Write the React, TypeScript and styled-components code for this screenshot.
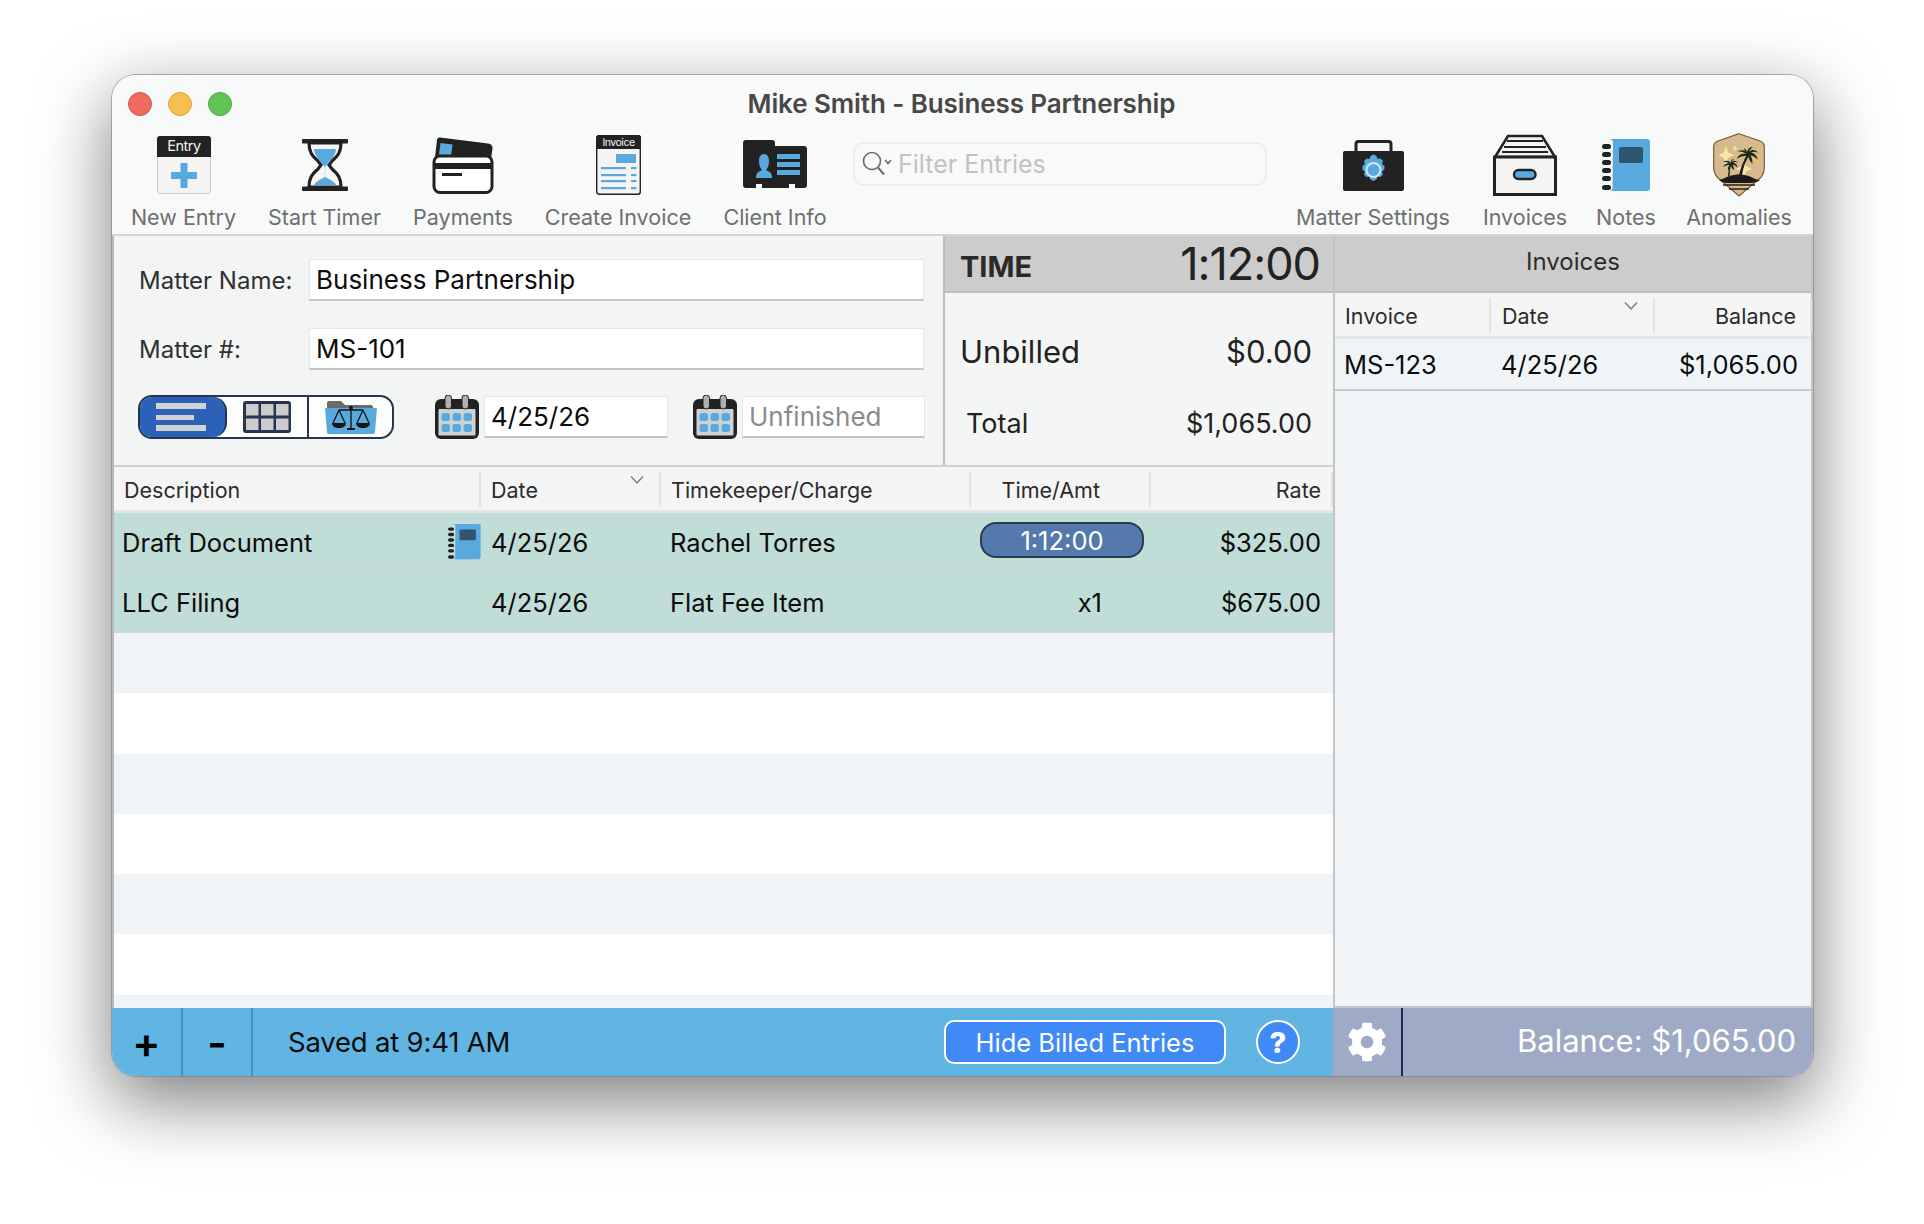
import styled, { createGlobalStyle } from "styled-components";
import { FaCog } from "react-icons/fa";

const DARK = "#222222";
const BLUE = "#5aa9de";

const GlobalStyle = createGlobalStyle`
  html, body {
    margin: 0;
    background: #ffffff;
    font-family: Inter, "Noto Sans", "Liberation Sans", sans-serif;
    overflow: hidden;
  }
  #root {
    width: 1924px;
    height: 1224px;
  }
`;

const Page = styled.div`
  box-sizing: border-box;
  width: 1924px;
  height: 1224px;
  padding: 75px 0 0 112px;
`;

const Window = styled.div`
  display: flex;
  flex-direction: column;
  width: 1701px;
  height: 1001px;
  border-radius: 24px;
  overflow: hidden;
  background: #f8f9f9;
  box-shadow: 0 0 0 1px rgba(120, 120, 120, 0.55), 0 24px 70px 2px rgba(0, 0, 0, 0.5);
`;

const Header = styled.header`
  box-sizing: border-box;
  height: 161px;
  flex: none;
  background: #f8f9f9;
  border-bottom: 2px solid #d2d3d3;
`;

const TitleRow = styled.div`
  position: relative;
  display: flex;
  align-items: center;
  justify-content: center;
  height: 57px;
  padding-top: 0;
`;

const Lights = styled.div`
  position: absolute;
  left: 16px;
  top: 17px;
  display: flex;
  gap: 16px;
`;

const Light = styled.span<{ $c: string; $b: string }>`
  box-sizing: border-box;
  width: 24px;
  height: 24px;
  border-radius: 50%;
  background: ${(p) => p.$c};
  border: 1px solid ${(p) => p.$b};
`;

const Title = styled.div`
  margin-top: -0px;
  font-size: 26px;
  font-weight: 600;
  color: #484848;
  letter-spacing: -0.1px;
  margin-left: -2px;
`;

const Toolbar = styled.div`
  display: flex;
  align-items: flex-start;
  padding: 0 20px 0 18px;
`;

const ToolGroup = styled.div`
  display: flex;
  gap: 29px;
`;

const Tool = styled.div<{ $w: number }>`
  display: flex;
  flex-direction: column;
  align-items: center;
  width: ${(p) => p.$w}px;
`;

const ToolIcon = styled.div`
  display: flex;
  align-items: center;
  justify-content: center;
  height: 66px;
`;

const ToolLabel = styled.div`
  height: 38px;
  line-height: 38px;
  font-size: 21.5px;
  color: #6f6f6f;
  white-space: nowrap;
`;

const SearchBox = styled.div`
  box-sizing: border-box;
  display: flex;
  align-items: center;
  gap: 6px;
  width: 414px;
  height: 44px;
  margin: 10px 0 0 25px;
  padding-left: 7px;
  border: 2px solid #ededed;
  border-radius: 10px;
`;

const SearchText = styled.span`
  font-size: 25px;
  color: #c2c2c2;
`;

const RightTools = styled(ToolGroup)`
  margin-left: auto;
`;

const Main = styled.main`
  display: flex;
  flex: 1;
  min-height: 0;
`;

const LeftColumn = styled.div`
  box-sizing: border-box;
  display: flex;
  flex-direction: column;
  width: 1221px;
  border-left: 2px solid #b9b9b9;
  background: #ffffff;
`;

const TopPanels = styled.div`
  display: flex;
  height: 231px;
  flex: none;
  border-bottom: 2px solid #cfcfcf;
  box-sizing: border-box;
`;

const Form = styled.div`
  box-sizing: border-box;
  width: 829px;
  padding: 23px 0 0 25px;
  background: #f3f5f5;
`;

const FieldRow = styled.div`
  display: flex;
  align-items: center;
  margin-bottom: 27px;
`;

const FieldLabel = styled.label`
  width: 170px;
  font-size: 24px;
  color: #303030;
`;

const Field = styled.div<{ $w: number; $muted?: boolean }>`
  box-sizing: border-box;
  display: flex;
  align-items: center;
  width: ${(p) => p.$w}px;
  height: 42px;
  padding-left: 6px;
  background: #ffffff;
  border: 1px solid #e6e6e6;
  border-bottom: 2px solid #c4c4c4;
  font-size: 26px;
  color: ${(p) => (p.$muted ? "#8b8b8b" : "#0c0c0c")};
  white-space: nowrap;
`;

const ControlRow = styled.div`
  display: flex;
  align-items: center;
  margin-top: -2px;
`;

const Segments = styled.div`
  box-sizing: border-box;
  display: flex;
  width: 256px;
  height: 44px;
  margin-left: -1px;
  border: 2px solid #26344f;
  border-radius: 14px;
  overflow: hidden;
  background: #fdfdfd;
`;

const Segment = styled.div<{ $active?: boolean; $w: number }>`
  box-sizing: border-box;
  display: flex;
  align-items: center;
  justify-content: center;
  width: ${(p) => p.$w}px;
  background: ${(p) => (p.$active ? "#2b61b7" : "transparent")};
  border-right: 2px solid #26344f;
  border-radius: ${(p) => (p.$active ? "0 14px 14px 0" : "0")};
  &:last-child {
    border-right: none;
  }
`;

const CalendarSlot = styled.div<{ $ml: number }>`
  display: flex;
  margin: 0 5px 0 ${(p) => p.$ml}px;
`;

const TimePanel = styled.div`
  box-sizing: border-box;
  width: 390px;
  border-left: 2px solid #bdbdbd;
  background: #f4f6f6;
`;

const TimeHeader = styled.div`
  box-sizing: border-box;
  display: flex;
  align-items: center;
  justify-content: space-between;
  height: 57px;
  padding: 0 13px 0 15px;
  background: #cccccc;
  border-bottom: 2px solid #bdbdbd;
`;

const TimeTitle = styled.span`
  font-size: 29px;
  font-weight: 700;
  color: #2a2a2a;
  margin-top: 6px;
`;

const TimeValue = styled.span`
  font-size: 45px;
  color: #222222;
  letter-spacing: -1px;
`;

const Amount = styled.div<{ $size: number; $pl: number; $h: number }>`
  display: flex;
  align-items: center;
  justify-content: space-between;
  height: ${(p) => p.$h}px;
  padding: 0 21px 0 ${(p) => p.$pl}px;
  font-size: ${(p) => p.$size}px;
  color: #222222;
`;

const TableHead = styled.div<{ $cols: string }>`
  box-sizing: border-box;
  display: grid;
  grid-template-columns: ${(p) => p.$cols};
  height: 46px;
  flex: none;
  background: #f5f5f5;
  border-bottom: 3px solid #e6e6e6;
`;

const HeadCell = styled.div<{ $align?: string; $pl?: number; $pr?: number }>`
  box-sizing: border-box;
  display: flex;
  align-items: center;
  justify-content: ${(p) => p.$align ?? "flex-start"};
  position: relative;
  margin: 5px 0 3px;
  padding-left: ${(p) => p.$pl ?? 10}px;
  padding-right: ${(p) => p.$pr ?? 0}px;
  border-right: 2px solid #e3e3e3;
  font-size: 21.5px;
  color: #2b2b2b;
`;

const SortChevron = styled.svg<{ $right: number }>`
  position: absolute;
  right: ${(p) => p.$right}px;
  top: 3px;
`;

const EntryRow = styled.div<{ $cols: string }>`
  box-sizing: border-box;
  display: grid;
  grid-template-columns: ${(p) => p.$cols};
  height: 60px;
  flex: none;
  background: #c0ddd8;
  border-bottom: 2px solid #cfd3e6;
`;

const EntryCell = styled.div<{ $align?: string; $pl?: number; $pr?: number }>`
  box-sizing: border-box;
  display: flex;
  align-items: center;
  justify-content: ${(p) => p.$align ?? "flex-start"};
  padding-left: ${(p) => p.$pl ?? 0}px;
  padding-right: ${(p) => p.$pr ?? 0}px;
  font-size: 25.5px;
  color: #0c0c0c;
  white-space: nowrap;
`;

const TimePill = styled.div`
  box-sizing: border-box;
  display: flex;
  align-items: center;
  justify-content: center;
  width: 164px;
  height: 36px;
  margin-top: -4px;
  border: 2px solid #2a3b52;
  border-radius: 16px;
  background: #5379ad;
  color: #ffffff;
  font-size: 25.5px;
`;

const Stripes = styled.div`
  flex: 1;
  min-height: 0;
  overflow: hidden;
`;

const Stripe = styled.div<{ $odd: boolean }>`
  height: 60.3px;
  background: ${(p) => (p.$odd ? "#f0f4f7" : "#ffffff")};
`;

const RightColumn = styled.div`
  box-sizing: border-box;
  display: flex;
  flex-direction: column;
  width: 480px;
  border-left: 2px solid #c4c4c4;
  border-right: 2px solid #c4c4c4;
  border-bottom: 2px solid #c4c4c4;
  background: #f0f4f7;
`;

const InvoicesTitle = styled.div`
  box-sizing: border-box;
  display: flex;
  align-items: center;
  justify-content: center;
  height: 57px;
  flex: none;
  background: #cccccc;
  border-bottom: 2px solid #bdbdbd;
  font-size: 24px;
  color: #2c2c2c;
  padding-bottom: 4px;
`;

const InvoiceRow = styled.div<{ $cols: string }>`
  box-sizing: border-box;
  display: grid;
  grid-template-columns: ${(p) => p.$cols};
  height: 52px;
  flex: none;
  border-bottom: 2px solid #c9c9c9;
`;

const Footer = styled.footer`
  display: flex;
  height: 68px;
  flex: none;
`;

const FooterLeft = styled.div`
  display: flex;
  align-items: stretch;
  width: 1221px;
  padding-right: 33px;
  box-sizing: border-box;
  background: #60b5e3;
`;

const FooterKey = styled.div<{ $w: number }>`
  box-sizing: border-box;
  display: flex;
  align-items: center;
  justify-content: center;
  width: ${(p) => p.$w}px;
  border-right: 2px solid #4a8fbd;
  font-size: 42px;
  font-weight: 600;
  color: #000000;
`;

const SavedText = styled.div`
  display: flex;
  align-items: center;
  padding-left: 35px;
  font-size: 27.5px;
  color: #0b0b0b;
  letter-spacing: -0.2px;
`;

const HideButton = styled.div`
  box-sizing: border-box;
  display: flex;
  align-items: center;
  justify-content: center;
  align-self: center;
  width: 282px;
  height: 44px;
  margin-left: auto;
  border: 2px solid #ffffff;
  border-radius: 10px;
  background: #3f8af7;
  color: #ffffff;
  font-size: 25.5px;
`;

const HelpButton = styled.div`
  box-sizing: border-box;
  display: flex;
  align-items: center;
  justify-content: center;
  align-self: center;
  width: 44px;
  height: 44px;
  margin-left: 30px;
  border: 2px solid #ffffff;
  border-radius: 50%;
  background: #3f8af7;
  color: #ffffff;
  font-size: 29px;
  font-weight: 800;
`;

const FooterRight = styled.div`
  display: flex;
  flex: 1;
  background: #9fabc6;
`;

const GearCell = styled.div`
  box-sizing: border-box;
  display: flex;
  align-items: center;
  justify-content: center;
  width: 70px;
  border-right: 2px solid #1f2d4d;
  color: #ffffff;
`;

const BalanceText = styled.div`
  display: flex;
  align-items: center;
  justify-content: flex-end;
  flex: 1;
  padding: 0 17px 4px 0;
  font-size: 31px;
  color: #ffffff;
`;

const EntryIcon = () => (
  <svg width="54" height="58" viewBox="0 0 54 58">
    <rect x="0.5" y="0.5" width="53" height="57" rx="3" fill="#f4f4f4" stroke="#cccccc" />
    <path d="M0 3a3 3 0 0 1 3-3h48a3 3 0 0 1 3 3v18H0z" fill={DARK} />
    <text x="27" y="15" textAnchor="middle" fontSize="14.5" fontFamily="Inter, sans-serif" fill="#f2f2f2" letterSpacing="-0.5">
      Entry
    </text>
    <path d="M23.5 27h7v9h9.5v7h-9.5v9h-7v-9H14v-7h9.5z" fill={BLUE} />
  </svg>
);

const HourglassIcon = () => (
  <svg width="46" height="52" viewBox="0 0 46 52">
    <path d="M7 4c0 9 3 13 9 18l3 4-3 4c-6 5-9 9-9 18h32c0-9-3-13-9-18l-3-4 3-4c6-5 9-9 9-18z" fill="#f5f5f5" stroke={DARK} strokeWidth="3.2" />
    <path d="M12 10h22c-.5 6-4 10-8 14l-3 5-3-5c-4-4-7.500-8-8-14z" fill={BLUE} />
    <path d="M23 26v12" stroke="#d9dfe5" strokeWidth="1" />
    <path d="M12 46c1-3 7-6 11-8 4 2 10 5 11 8z" fill={BLUE} />
    <rect x="0" y="0" width="46" height="4.500" rx="1" fill={DARK} />
    <rect x="0" y="47.500" width="46" height="4.500" rx="1" fill={DARK} />
  </svg>
);

const PaymentsIcon = () => (
  <svg width="62" height="58" viewBox="0 0 62 58">
    <path d="M8 1.500l48 6c3 .4 5 2.500 4.500 5L58 30H2L5 4c.3-2 1.500-2.800 3-2.500z" fill={DARK} />
    <path d="M8.500 7l12 1.500-1.500 11.500-12-1.500z" fill={BLUE} />
    <rect x="2" y="20" width="58" height="36.500" rx="6" fill="#ffffff" stroke={DARK} strokeWidth="3" />
    <rect x="1" y="27" width="60" height="6" fill={DARK} />
    <rect x="10" y="37" width="20" height="3" fill={DARK} />
  </svg>
);

const InvoiceIcon = () => (
  <svg width="45" height="60" viewBox="0 0 45 60">
    <rect x="0.700" y="0.700" width="43.600" height="58.600" rx="2.500" fill="#f4f4f4" stroke={DARK} strokeWidth="1.400" />
    <path d="M0 3a3 3 0 0 1 3-3h39a3 3 0 0 1 3 3v11H0z" fill={DARK} />
    <text x="22.500" y="11" textAnchor="middle" fontSize="10.500" fontFamily="Inter, sans-serif" fill="#f2f2f2" letterSpacing="-0.5">
      Invoice
    </text>
    <rect x="20" y="19" width="20" height="9" fill={BLUE} />
    {[32, 39, 45, 52].map((y) => (
      <g key={y} fill={BLUE}>
        <rect x="5" y={y} width="25" height="2.200" />
        <rect x="35" y={y} width="5.500" height="2.200" />
      </g>
    ))}
  </svg>
);

const ClientIcon = () => (
  <svg width="64" height="50" viewBox="0 0 64 50">
    <path d="M3 0h26c2 0 3 1 3 3v3h29c2 0 3 1 3 3v36c0 2-1 3-3 3H52v-4h-6v4H19v-4h-6v4H3c-2 0-3-1-3-3V3c0-2 1-3 3-3z" fill={DARK} />
    <path d="M14 37c0-5 2-6 6-8-2-2-3-5-3-9 0-4 1.500-7 5-7s5 3 5 7c0 4-1 7-3 9 4 2 6 3 6 8z" fill={BLUE} transform="translate(-1 1)" />
    <rect x="34" y="14" width="23" height="5" fill={BLUE} />
    <rect x="34" y="22" width="23" height="5" fill={BLUE} />
    <rect x="34" y="30" width="23" height="5" fill={BLUE} />
  </svg>
);

const SearchGlyph = () => (
  <svg width="30" height="26" viewBox="0 0 30 26" fill="none" stroke="#6b6b6b" strokeWidth="1.600">
    <circle cx="10" cy="10" r="8.500" />
    <path d="M16 16.500l6 7" strokeWidth="2" />
    <path d="M23 9l3 3.500 3-3.500" />
  </svg>
);

const CaseIcon = () => (
  <svg width="61" height="51" viewBox="0 0 61 51">
    <path d="M13 12V4c0-1.500 1-2.500 2.500-2.500h30C47 1.500 48 2.500 48 4v8" fill="#f5f5f5" stroke={DARK} strokeWidth="3" />
    <rect x="0" y="11" width="61" height="40" rx="2" fill={DARK} />
    <path
      d="M27.500 17l3-1.500 3 1.500 1 3 3-.5 2.500 2.500-1 3 2.500 2-.1 3.500-2.500 2 1 3-2.500 2.500-3-.5-1 3-3 1.500-3-1.500-1-3-3 .5-2.500-2.500 1-3-2.500-2 .1-3.500 2.500-2-1-3 2.500-2.500 3 .5z"
      fill={BLUE}
      transform="translate(0 -1) "
    />
    <circle cx="30.500" cy="30" r="7" fill={BLUE} stroke="#cfe8f8" strokeWidth="2" />
  </svg>
);

const BoxIcon = () => (
  <svg width="64" height="62" viewBox="0 0 64 62">
    <path d="M15 2h34l13 21H2z" fill="#f4f4f4" stroke={DARK} strokeWidth="2.600" />
    <path d="M14 7h36M11 13h42M9 18h46" stroke={DARK} strokeWidth="2.200" />
    <rect x="1.500" y="23" width="61" height="37.500" fill="#f4f4f4" stroke={DARK} strokeWidth="3" />
    <rect x="21" y="36" width="21.500" height="9" rx="4.500" fill={BLUE} stroke={DARK} strokeWidth="2.400" />
  </svg>
);

const NotebookIcon = ({ scale = 1 }: { scale?: number }) => (
  <svg width={48 * scale} height={52 * scale} viewBox="0 0 48 52">
    <path d="M8 0h37c2 0 3 1 3 3v46c0 2-1 3-3 3H8c2-1 3-2 2.500-3l.5-46C11 2 10 1 8 0z" fill={BLUE} />
    <rect x="17" y="8" width="24" height="16" rx="2" fill="#2f566f" />
    {[5, 13, 21, 29, 37, 46].map((y) => (
      <rect key={y} x="0" y={y} width="9" height="5" rx="2.500" fill={DARK} />
    ))}
  </svg>
);

const AnomaliesIcon = () => (
  <svg width="52" height="64" viewBox="0 0 52 64">
    <path d="M26 .700L47 8c3 1 4.300 3 4.300 6v21c0 4-1 6-3 9L26 63 4 44c-2-3-3.300-5-3.300-9V14c0-3 1.300-5 4.300-6z" fill="#d6ba8e" stroke="#7c5a32" strokeWidth="1.200" />
    <path d="M13 13l2.200 6.500 5.800 2.500-5.800 3-2.200 7-2.200-7-5.300-3 5.300-2.500z" fill="#f7e6a6" />
    <path d="M31 26l2 7 5.500 3-5.500 2.500-2 6.500-2-6.500-6-2.500 6-3z" fill="#f7e6a6" />
    <path d="M44 22l1 3 2.500 1-2.500 1-1 3.500-1-3.500-2.500-1 2.500-1z" fill="#f0c95a" />
    <path d="M22 12l.8 2.500 2.200.8-2.200 1-.8 2.500-.8-2.500-2.200-1 2.200-.8z" fill="#f7e6a6" />
    <path d="M26 42c2-9 5-16 9-21l1.500.6c-3.500 5-6 12-7.500 20.400z" fill={DARK} />
    <path d="M36 21c-3-4-8-5-12-2 4-1 7 0 9 2-4-1-8 1-9 5 3-2.500 6-3.500 9.500-3-2 2-3 5-2 8 1.500-3 2.500-5 4-7 .5 3 2 5 4 6.500 0-3-.5-5.500-2-8 3 .5 5.500 2 7 4.500 0-4-2.500-6.500-6.500-7.500 2.500-1 5-1 7.500.5-2.500-3.500-6.500-4-9.500-1.500 1-2 2.500-3.500 4-4.500-3.500 0-5.500 2-6 5-.5-1.500-1.500-3-3-4 .2 1.500 1 3 2 4.500z" fill="#1e2a14" />
    <path d="M15 43c.5-5 1-9 2.500-13l1 .3c-1.200 4-1.800 8-1.800 12.700z" fill={DARK} />
    <path d="M18 30c-2-2.500-5-3-8-1 2.500-.3 4.500.2 6 1.300-2.500 0-5 1.300-6 4 2.200-1.800 4.300-2.500 6.500-2.300-1.300 1.500-2 3.500-1.300 5.500 1-2 1.700-3.500 2.800-4.800.5 2 1.500 3.300 3 4.300 0-2-.3-3.500-1.200-5.200 2 .3 3.500 1.300 4.700 3 0-2.800-1.800-4.500-4.500-5.200 1.700-.7 3.300-.7 5 .3-1.700-2.300-4.300-2.700-6.500-1 .6-1.300 1.500-2.300 2.700-3-2.300 0-3.600 1.300-3.200 4.100z" fill="#1e2a14" />
    <path d="M6 47c5-1 8-4 15-5s13 0 17 2 6 3 9 3c-2 2-6 3-10 3H15c-4 0-7-1-9-3z" fill="#1a1a1a" />
    <path d="M10 52h32M16 56h20" stroke="#2a2118" strokeWidth="1.400" />
  </svg>
);

const CalendarIcon = () => (
  <svg width="44" height="44" viewBox="0 0 44 44">
    <rect x="0" y="4" width="44" height="40" rx="6" fill={DARK} />
    <rect x="3.500" y="14" width="37" height="26.500" rx="1" fill="#cdd2d5" />
    <rect x="10" y="0" width="6.500" height="14" rx="3.200" fill="#b0b0b0" stroke={DARK} strokeWidth="1" />
    <rect x="27" y="0" width="6.500" height="14" rx="3.200" fill="#b0b0b0" stroke={DARK} strokeWidth="1" />
    {[18, 29].map((y) =>
      [6.500, 17.500, 28.500].map((x) => (
        <rect key={`${x}-${y}`} x={x} y={y} width="8.500" height="8" rx="2.500" fill={BLUE} />
      )),
    )}
  </svg>
);

const ListGlyph = () => (
  <svg width="52" height="28" viewBox="0 0 52 28" fill="#d2d2d2">
    <rect x="0" y="0" width="50" height="6" />
    <rect x="0" y="12" width="38" height="5" />
    <rect x="0" y="22" width="50" height="6" />
  </svg>
);

const GridGlyph = () => (
  <svg width="48" height="32" viewBox="0 0 48 32">
    <rect x="0" y="0" width="48" height="32" rx="3" fill="#26344f" />
    {[3, 17.500].map((y) =>
      [3, 18, 33].map((x) => (
        <rect key={`${x}-${y}`} x={x} y={y} width="12.500" height="11.500" fill="#cccccc" />
      )),
    )}
  </svg>
);

const FolderGlyph = () => (
  <svg width="52" height="33" viewBox="0 0 52 33">
    <path d="M2 2c0-1 1-2 2-2h12l4 4h26c1 0 2 1 2 2v4H2z" fill="#6b6b6b" />
    <path d="M0 7h52l-2 24c0 1-1 2-2 2H4c-1 0-2-1-2-2z" fill={BLUE} />
    <g stroke="#141414" strokeWidth="1.300" fill="none">
      <path d="M26 5v22M14 9h24M14 9l-6 13M14 9l6 13M38 9l-6 13M38 9l6 13" />
    </g>
    <g fill="#141414">
      <path d="M7 22h14c0 3-3 5-7 5s-7-2-7-5z" />
      <path d="M31 22h14c0 3-3 5-7 5s-7-2-7-5z" />
      <rect x="22" y="27" width="8" height="2" />
      <circle cx="26" cy="7" r="2" />
    </g>
  </svg>
);

const Chevron = ({ right }: { right: number }) => (
  <SortChevron $right={right} width="14" height="10" viewBox="0 0 14 10" fill="none" stroke="#7d7d7d" strokeWidth="1.500">
    <path d="M1 1.500l6 6.500 6-6.500" />
  </SortChevron>
);

const ENTRY_COLS = "367px 180px 310px 180px 182px";
const INVOICE_COLS = "156px 164px 157px";

const leftTools = [
  { label: "New Entry", w: 107, icon: <EntryIcon /> },
  { label: "Start Timer", w: 117, icon: <HourglassIcon /> },
  { label: "Payments", w: 102, icon: <PaymentsIcon /> },
  { label: "Create Invoice", w: 150, icon: <InvoiceIcon /> },
  { label: "Client Info", w: 106, icon: <ClientIcon /> },
];

const rightTools = [
  { label: "Matter Settings", w: 162, icon: <CaseIcon /> },
  { label: "Invoices", w: 84, icon: <BoxIcon /> },
  { label: "Notes", w: 60, icon: <NotebookIcon /> },
  { label: "Anomalies", w: 108, icon: <AnomaliesIcon /> },
];

export default function App() {
  return (
    <Page>
      <GlobalStyle />
      <Window>
        <Header>
          <TitleRow>
            <Lights>
              <Light $c="#ee6a5f" $b="#d2554a" />
              <Light $c="#f6be4f" $b="#d9a03c" />
              <Light $c="#61c454" $b="#4ea644" />
            </Lights>
            <Title>Mike Smith - Business Partnership</Title>
          </TitleRow>
          <Toolbar>
            <ToolGroup>
              {leftTools.map((t) => (
                <Tool key={t.label} $w={t.w}>
                  <ToolIcon>{t.icon}</ToolIcon>
                  <ToolLabel>{t.label}</ToolLabel>
                </Tool>
              ))}
            </ToolGroup>
            <SearchBox>
              <SearchGlyph />
              <SearchText>Filter Entries</SearchText>
            </SearchBox>
            <RightTools>
              {rightTools.map((t) => (
                <Tool key={t.label} $w={t.w}>
                  <ToolIcon>{t.icon}</ToolIcon>
                  <ToolLabel>{t.label}</ToolLabel>
                </Tool>
              ))}
            </RightTools>
          </Toolbar>
        </Header>

        <Main>
          <LeftColumn>
            <TopPanels>
              <Form>
                <FieldRow>
                  <FieldLabel>Matter Name:</FieldLabel>
                  <Field $w={615}>Business Partnership</Field>
                </FieldRow>
                <FieldRow>
                  <FieldLabel>Matter #:</FieldLabel>
                  <Field $w={615}>MS-101</Field>
                </FieldRow>
                <ControlRow>
                  <Segments>
                    <Segment $active $w={88}>
                      <ListGlyph />
                    </Segment>
                    <Segment $w={84}>
                      <GridGlyph />
                    </Segment>
                    <Segment $w={84}>
                      <FolderGlyph />
                    </Segment>
                  </Segments>
                  <CalendarSlot $ml={41}>
                    <CalendarIcon />
                  </CalendarSlot>
                  <Field $w={184}>4/25/26</Field>
                  <CalendarSlot $ml={25}>
                    <CalendarIcon />
                  </CalendarSlot>
                  <Field $w={183} $muted>
                    Unfinished
                  </Field>
                </ControlRow>
              </Form>
              <TimePanel>
                <TimeHeader>
                  <TimeTitle>TIME</TimeTitle>
                  <TimeValue>1:12:00</TimeValue>
                </TimeHeader>
                <Amount $size={31} $pl={15} $h={116}>
                  <span>Unbilled</span>
                  <span>$0.00</span>
                </Amount>
                <Amount $size={27} $pl={21} $h={28}>
                  <span>Total</span>
                  <span>$1,065.00</span>
                </Amount>
              </TimePanel>
            </TopPanels>

            <TableHead $cols={ENTRY_COLS}>
              <HeadCell>Description</HeadCell>
              <HeadCell>
                Date
                <Chevron right={15} />
              </HeadCell>
              <HeadCell>Timekeeper/Charge</HeadCell>
              <HeadCell $align="flex-end" $pr={49}>
                Time/Amt
              </HeadCell>
              <HeadCell $align="flex-end" $pr={10}>
                Rate
              </HeadCell>
            </TableHead>
            <EntryRow $cols={ENTRY_COLS}>
              <EntryCell $pl={8} $align="space-between">
                Draft Document
                <NotebookIcon scale={0.68} />
              </EntryCell>
              <EntryCell $pl={10}>4/25/26</EntryCell>
              <EntryCell $pl={9}>Rachel Torres</EntryCell>
              <EntryCell $pl={9}>
                <TimePill>1:12:00</TimePill>
              </EntryCell>
              <EntryCell $align="flex-end" $pr={12}>
                $325.00
              </EntryCell>
            </EntryRow>
            <EntryRow $cols={ENTRY_COLS}>
              <EntryCell $pl={8}>LLC Filing</EntryCell>
              <EntryCell $pl={10}>4/25/26</EntryCell>
              <EntryCell $pl={9}>Flat Fee Item</EntryCell>
              <EntryCell $align="flex-end" $pr={49}>
                x1
              </EntryCell>
              <EntryCell $align="flex-end" $pr={12}>
                $675.00
              </EntryCell>
            </EntryRow>
            <Stripes>
              {[0, 1, 2, 3, 4, 5, 6].map((i) => (
                <Stripe key={i} $odd={i % 2 === 0} />
              ))}
            </Stripes>
          </LeftColumn>

          <RightColumn>
            <InvoicesTitle>Invoices</InvoicesTitle>
            <TableHead $cols={INVOICE_COLS}>
              <HeadCell>Invoice</HeadCell>
              <HeadCell $pl={11}>
                Date
                <Chevron right={15} />
              </HeadCell>
              <HeadCell $align="flex-end" $pr={14}>
                Balance
              </HeadCell>
            </TableHead>
            <InvoiceRow $cols={INVOICE_COLS}>
              <EntryCell $pl={9}>MS-123</EntryCell>
              <EntryCell $pl={10}>4/25/26</EntryCell>
              <EntryCell $align="flex-end" $pr={14}>
                $1,065.00
              </EntryCell>
            </InvoiceRow>
          </RightColumn>
        </Main>

        <Footer>
          <FooterLeft>
            <FooterKey $w={71}>+</FooterKey>
            <FooterKey $w={70}>-</FooterKey>
            <SavedText>Saved at 9:41 AM</SavedText>
            <HideButton>Hide Billed Entries</HideButton>
            <HelpButton>?</HelpButton>
          </FooterLeft>
          <FooterRight>
            <GearCell>
              <FaCog size={40} />
            </GearCell>
            <BalanceText>Balance: $1,065.00</BalanceText>
          </FooterRight>
        </Footer>
      </Window>
    </Page>
  );
}
